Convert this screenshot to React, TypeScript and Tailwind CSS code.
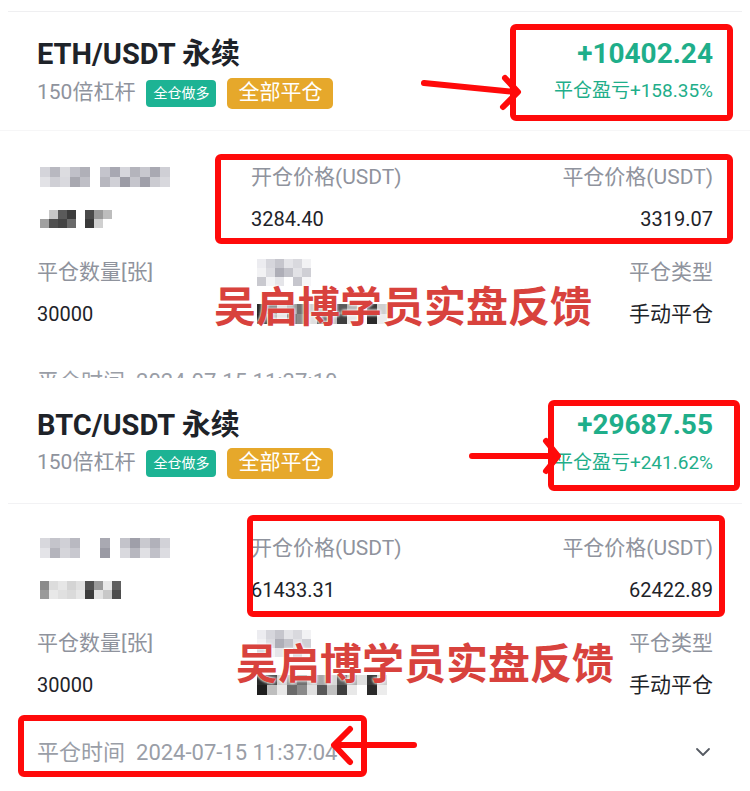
import React from "react";
import { ChevronDown } from "lucide-react";

const FONT = "font-['Roboto','Noto_Sans_CJK_SC',sans-serif]";

function Mosaic({ rows, cell = 10 }: { rows: string[][]; cell?: number }) {
  return (
    <div className="flex flex-col">
      {rows.map((r, i) => (
        <div key={i} className="flex">
          {r.map((c, j) => (
            <div key={j} style={{ width: cell, height: cell, background: c }} />
          ))}
        </div>
      ))}
    </div>
  );
}

const labelBlurA = [
  ["#d4d4da", "#b8b8c0", "#dcdce0", "#c0c0c8", "#b0b0b8", "#ffffff", "#c4c4cc", "#a8a8b2", "#d6d6dc", "#b4b4bc", "#c8c8cf", "#a9a9b2", "#cfcfd5"],
  ["#e2e2e6", "#cfcfd5", "#d9d9de", "#a8a8b0", "#bfbfc6", "#ffffff", "#b7b7bf", "#d0d0d6", "#9c9ca6", "#c5c5cc", "#a0a0aa", "#cbcbd1", "#d8d8dd"],
];
const valueBlurA = [
  ["#ffffff", "#c8c8c8", "#5a5a5a", "#3c3c3c", "#ffffff", "#4a4a4a", "#9a9a9a", "#bdbdbd"],
  ["#a0a0a0", "#505050", "#444444", "#6a6a6a", "#ffffff", "#3a3a3a", "#d0d0d0", "#ffffff"],
];
const labelBlurB = [
  ["#d8d8dd", "#c4c4cb", "#d0d0d6", "#b9b9c1", "#ffffff", "#ffffff", "#a9a9b2", "#ffffff", "#c3c3ca", "#9f9fa9", "#c9c9cf", "#b1b1ba", "#d2d2d8"],
  ["#e4e4e8", "#b4b4bc", "#d5d5da", "#c8c8cf", "#ffffff", "#ffffff", "#9a9aa4", "#ffffff", "#d9d9de", "#b7b7bf", "#e0e0e4", "#c0c0c8", "#dcdce1"],
];
const valueBlurB = [
  ["#8a8a8a", "#dcdcdc", "#e6e6e6", "#d4d4d4", "#e0e0e0", "#505050", "#9a9a9a", "#e8e8e8", "#606060"],
  ["#9a9a9a", "#e8e8e8", "#e0e0e0", "#dadada", "#e6e6e6", "#3c3c3c", "#e2e2e2", "#c8c8c8", "#4c4c4c"],
];
const midLabelBlur = [
  ["#ececf0", "#d6d6dc", "#c6c6cd", "#e4e4e8", "#d9d9de", "#f2f2f4"],
  ["#f2f2f4", "#dcdce1", "#aeaeb7", "#c3c3ca", "#e2e2e6", "#cfcfd5"],
  ["#c9c9cf", "#f4f4f6", "#e5e5e9", "#ffffff", "#c6c6cd", "#f6f6f8"],
];
const midValueBlur = [
  ["#2a2a2a", "#4a4a4a", "#d0d0d0", "#9a9a9a", "#707070", "#c8c8c8", "#a8a8a8", "#d8d8d8", "#5a5a5a", "#b0b0b0", "#e0e0e0", "#3a3a3a", "#cfcfcf"],
  ["#1e1e1e", "#bdbdbd", "#e8e8e8", "#6a6a6a", "#8a8a8a", "#e0e0e0", "#585858", "#c0c0c0", "#3e3e3e", "#e8e8e8", "#ffffff", "#2a2a2a", "#ececec"],
];

function Header({
  pair,
  amount,
  pct,
  subGap,
  pctGap,
}: {
  pair: string;
  amount: string;
  pct: string;
  subGap: string;
  pctGap: string;
}) {
  return (
    <div className="flex justify-between px-[37px]">
      <div className="flex flex-col">
        <div className="h-[34px] whitespace-nowrap leading-[34px] text-[29px] font-bold text-[#1e2329]">{pair}</div>
        <div className={`flex h-[32px] items-center ${subGap}`}>
          <span className="text-[21px] text-[#8f939d]">150倍杠杆</span>
          <span className="ml-[11px] flex h-[27px] items-center rounded-[4px] bg-[#1db394] px-[7px] text-[14px] text-white">全仓做多</span>
          <span className="ml-[11px] flex h-[31px] items-center rounded-[5px] bg-[#e6a82b] px-[11px] text-[21px] text-white">全部平仓</span>
        </div>
      </div>
      <div className="flex flex-col items-end">
        <div className="h-[34px] leading-[34px] text-[28px] font-bold text-[#1fae8a]">{amount}</div>
        <div className={`h-[32px] leading-[32px] text-[19px] text-[#1fae8a] ${pctGap}`}>{pct}</div>
      </div>
    </div>
  );
}

function Details({
  open,
  close,
  labelBlur,
  valueBlur,
  time,
  withChevron,
}: {
  open: string;
  close: string;
  labelBlur: string[][];
  valueBlur: string[][];
  time: string;
  withChevron?: boolean;
}) {
  const label = "h-[28px] leading-[28px] text-[21px] text-[#8f939d] whitespace-nowrap";
  const value = "h-[28px] leading-[28px] text-[20px] text-[#1e2329] whitespace-nowrap";
  return (
    <div className="flex flex-col px-[37px]">
      <div className="grid grid-cols-[214px_1fr_auto]">
        <div className="flex h-[28px] items-center pl-[3px]">
          <Mosaic rows={labelBlur} />
        </div>
        <div className={label}>开仓价格(USDT)</div>
        <div className={`${label} text-right`}>平仓价格(USDT)</div>

        <div className="mt-[14px] flex h-[28px] items-center pl-[3px]">
          <Mosaic rows={valueBlur} cell={9} />
        </div>
        <div className={`${value} mt-[14px]`}>{open}</div>
        <div className={`${value} mt-[14px] text-right`}>{close}</div>

        <div className={`${label} mt-[25px]`}>平仓数量[张]</div>
        <div className="mt-[25px] flex h-[28px] items-center pl-[6px]">
          <Mosaic rows={midLabelBlur} cell={9} />
        </div>
        <div className={`${label} mt-[25px] text-right`}>平仓类型</div>

        <div className={`${value} mt-[14px]`}>30000</div>
        <div className="mt-[14px] flex h-[28px] items-center pl-[6px]">
          <Mosaic rows={midValueBlur} cell={10} />
        </div>
        <div className={`${value} mt-[14px] text-right text-[21px]`}>手动平仓</div>
      </div>
      <div className="mt-[39px] flex h-[28px] items-center justify-between">
        <span className="flex items-center whitespace-nowrap text-[22px] text-[#9a9ea7]">
          <span>平仓时间</span>
          <span className="ml-[11px]">{time}</span>
        </span>
        {withChevron && <ChevronDown size={24} strokeWidth={1.8} className="mr-[-2px] text-[#555a62]" />}
      </div>
    </div>
  );
}

function Stamp({ className }: { className: string }) {
  return (
    <div
      className={`absolute whitespace-nowrap text-[42px] font-bold leading-none text-[#d8423d] [text-shadow:0_0_3px_#ffffff,0_0_3px_#ffffff] ${className}`}
    >
      吴启博学员实盘反馈
    </div>
  );
}

export default function App() {
  return (
    <div className={`relative h-[791px] w-[750px] overflow-hidden bg-white ${FONT}`}>
      {/* Card 1 */}
      <div className="h-[378px] overflow-hidden">
        <div className="mx-[8px] mt-[11px] h-px bg-[#efeff1]" />
        <div className="pt-[25px]">
          <Header pair="ETH/USDT 永续" amount="+10402.24" pct="平仓盈亏+158.35%" subGap="mt-[6px]" pctGap="mt-[4px]" />
        </div>
        <div className="mt-[21px] h-px bg-[#f6f6f7]" />
        <div className="pt-[32px]">
          <Details
            open="3284.40"
            close="3319.07"
            labelBlur={labelBlurA}
            valueBlur={valueBlurA}
            time="2024-07-15 11:37:10"
          />
        </div>
      </div>

      {/* Card 2 */}
      <div className="h-[413px] overflow-hidden">
        <div className="pt-[30px]">
          <Header pair="BTC/USDT 永续" amount="+29687.55" pct="平仓盈亏+241.62%" subGap="mt-[5px]" pctGap="mt-[5px]" />
        </div>
        <div className="mx-[8px] mt-[24px] h-px bg-[#f2f2f4]" />
        <div className="pt-[30px]">
          <Details
            open="61433.31"
            close="62422.89"
            labelBlur={labelBlurB}
            valueBlur={valueBlurB}
            time="2024-07-15 11:37:04"
            withChevron
          />
        </div>
      </div>

      {/* Annotations */}
      <Stamp className="left-[214px] top-[287px]" />
      <Stamp className="left-[236px] top-[644px]" />

      <svg className="pointer-events-none absolute left-0 top-0" width={750} height={791} viewBox="0 0 750 791">
        <g fill="none" stroke="#ff0a0a" strokeWidth={6} strokeLinecap="round" strokeLinejoin="round">
          <rect x={513} y={27} width={217} height={91} rx={3} />
          <path d="M424 83 L516 92" />
          <path d="M505 78 L518 92 L503 107" />
          <rect x={218} y={157} width={512} height={84} rx={3} />
          <rect x={551} y={403} width={186} height={85} rx={3} />
          <path d="M472 456 L556 456" />
          <path d="M546 441 L558 456 L546 471" />
          <rect x={250} y={518} width={472} height={96} rx={3} />
          <rect x={21} y={718} width={343} height={56} rx={3} />
          <path d="M414 745 L336 745" />
          <path d="M350 729 L334 745 L350 762" />
        </g>
      </svg>
    </div>
  );
}
